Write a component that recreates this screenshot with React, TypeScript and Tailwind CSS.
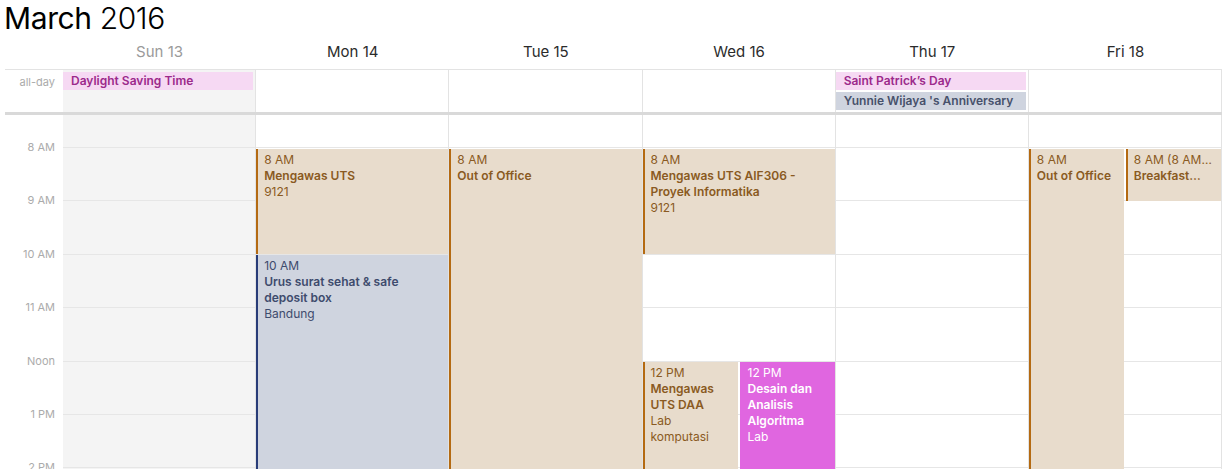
const HOUR = 53.4
const TOP = 32

const DAYS = [
  { label: 'Sun 13', weekend: true },
  { label: 'Mon 14' },
  { label: 'Tue 15' },
  { label: 'Wed 16' },
  { label: 'Thu 17' },
  { label: 'Fri 18' },
]

const HOURS = ['8 AM', '9 AM', '10 AM', '11 AM', 'Noon', '1 PM', '2 PM']

type Tone = 'brown' | 'blue' | 'magenta'

const TONES: Record<Tone, string> = {
  brown: 'bg-[#e8dccc] border-[#b46a12] text-[#8a5a22]',
  blue: 'bg-[#cfd4df] border-[#283c78] text-[#3e4b6d]',
  magenta: 'bg-[#e066e0] border-[#e066e0] text-white',
}

type CalEvent = {
  day: number
  start: number
  end: number
  lane?: 0 | 1
  split?: boolean
  tone: Tone
  time: string
  title: string
  place?: string
  clip?: boolean
}

const EVENTS: CalEvent[] = [
  { day: 1, start: 8, end: 10, tone: 'brown', time: '8 AM', title: 'Mengawas UTS', place: '9121' },
  { day: 1, start: 10, end: 15, tone: 'blue', time: '10 AM', title: 'Urus surat sehat & safe deposit box', place: 'Bandung' },
  { day: 2, start: 8, end: 17, tone: 'brown', time: '8 AM', title: 'Out of Office' },
  { day: 3, start: 8, end: 10, tone: 'brown', time: '8 AM', title: 'Mengawas UTS AIF306 - Proyek Informatika', place: '9121' },
  { day: 3, start: 12, end: 15, split: true, lane: 0, tone: 'brown', time: '12 PM', title: 'Mengawas UTS DAA', place: 'Lab komputasi' },
  { day: 3, start: 12, end: 15, split: true, lane: 1, tone: 'magenta', time: '12 PM', title: 'Desain dan Analisis Algoritma', place: 'Lab' },
  { day: 5, start: 8, end: 17, split: true, lane: 0, tone: 'brown', time: '8 AM', title: 'Out of Office' },
  { day: 5, start: 8, end: 9, split: true, lane: 1, tone: 'brown', time: '8 AM (8 AM…', title: 'Breakfast…', clip: true },
]

function EventBlock({ ev }: { ev: CalEvent }) {
  const top = TOP + (ev.start - 8) * HOUR + 1.6
  const height = (ev.end - ev.start) * HOUR - 1
  const pos = ev.split
    ? { left: ev.lane === 0 ? 0 : 97, width: 95 }
    : { left: 0, right: 0 }
  return (
    <div
      className={`absolute border-l-2 pl-[6px] pr-[6px] pt-[3px] text-[12px] leading-[16px] overflow-hidden ${TONES[ev.tone]}`}
      style={{ top, height, ...pos }}
    >
      <div className={ev.clip ? 'truncate' : ''}>{ev.time}</div>
      <div className={`font-semibold ${ev.clip ? 'truncate' : ''}`}>{ev.title}</div>
      {ev.place && <div>{ev.place}</div>}
    </div>
  )
}

export default function App() {
  return (
    <div className="w-[1222px] h-[469px] overflow-hidden bg-white font-['Inter','Noto_Sans',sans-serif] text-[#2b2b2b]">
      <div className="h-[36px] pl-[4px] text-[30px] leading-[36px] tracking-[-0.4px] text-black">
        <span className="font-normal">March</span> <span className="font-light">2016</span>
      </div>

      <div className="ml-[63px] grid grid-cols-6 h-[33px]">
        {DAYS.map((d) => (
          <div
            key={d.label}
            className={`flex items-center justify-center text-[15px] ${d.weekend ? 'text-[#9a9a9a]' : 'text-[#2b2b2b]'}`}
          >
            {d.label}
          </div>
        ))}
      </div>

      {/* all-day strip */}
      <div className="ml-[5px] flex border-t border-[#e3e3e3]">
        <div className="w-[58px] shrink-0 pr-[8px] pt-[3px] text-right text-[11px] leading-[18px] text-[#ababab]">
          all-day
        </div>
        <div className="flex-1 grid grid-cols-6 h-[42px]">
          <div className="border-r border-[#e3e3e3] bg-[#f4f4f4] pt-[2px] pr-[2px]">
            <div className="h-[18px] bg-[#f6d9f3] pl-[8px] text-[12px] leading-[18px] font-semibold text-[#9c2a8b]">
              Daylight Saving Time
            </div>
          </div>
          <div className="border-r border-[#e3e3e3]" />
          <div className="border-r border-[#e3e3e3]" />
          <div className="border-r border-[#e3e3e3]" />
          <div className="border-r border-[#e3e3e3] pt-[2px] pr-[2px] flex flex-col gap-[2px]">
            <div className="h-[18px] bg-[#f6d9f3] pl-[8px] text-[12px] leading-[18px] font-semibold text-[#9c2a8b]">
              Saint Patrick’s Day
            </div>
            <div className="h-[18px] bg-[#cfd4df] pl-[8px] text-[12px] leading-[18px] font-semibold text-[#47516b]">
              Yunnie Wijaya 's Anniversary
            </div>
          </div>
          <div className="border-r border-[#e3e3e3]" />
        </div>
      </div>
      <div className="ml-[5px] h-[3px] bg-[#d9d9d9]" />

      {/* time grid */}
      <div className="flex">
        <div className="w-[63px] shrink-0 pt-[25px] pr-[8px] text-right text-[11px] leading-[14px] text-[#ababab]">
          {HOURS.map((h) => (
            <div key={h} className="h-[53.4px]">
              {h}
            </div>
          ))}
        </div>
        <div className="flex-1 grid grid-cols-6">
          {DAYS.map((d, i) => (
            <div
              key={d.label}
              className={`relative border-r border-[#e3e3e3] ${d.weekend ? 'bg-[#f4f4f4]' : ''}`}
            >
              <div className="h-[32px]" />
              {HOURS.map((h) => (
                <div key={h} className="h-[53.4px] border-t border-[#e6e6e6]" />
              ))}
              {EVENTS.filter((e) => e.day === i).map((ev) => (
                <EventBlock key={ev.title + ev.lane} ev={ev} />
              ))}
            </div>
          ))}
        </div>
      </div>
    </div>
  )
}
